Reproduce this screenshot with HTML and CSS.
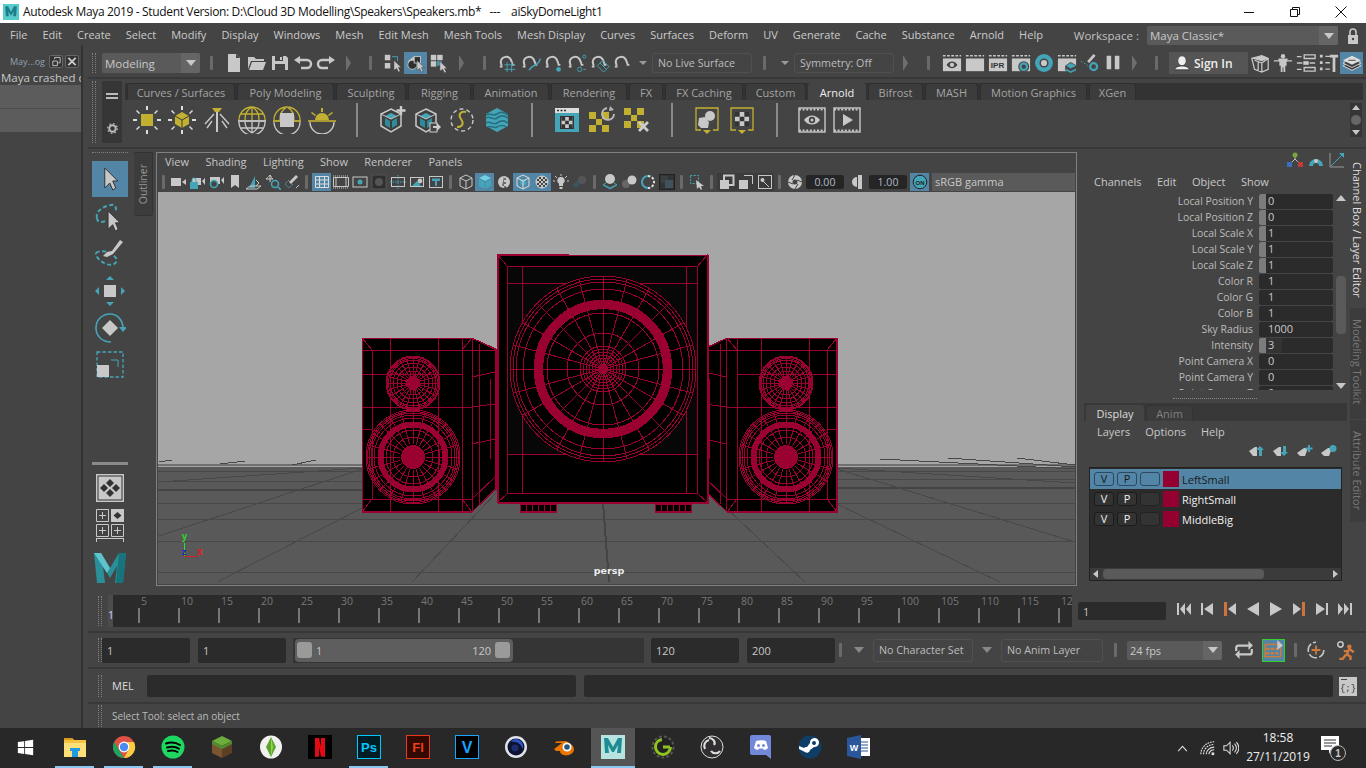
FILE: index.html
```html
<!DOCTYPE html>
<html lang="en">
<head>
<meta charset="utf-8">
<title>Autodesk Maya 2019</title>
<link rel="stylesheet" href="styles.css">
</head>
<body>
<svg class="defs" aria-hidden="true">
<defs>
<!-- status line -->
<symbol id="newf" viewBox="0 0 20 20"><path fill="#c8c8c8" d="M4 1h8l4 4v14H4z"/><path fill="#444" d="M12 1v4h4z"/></symbol>
<symbol id="open" viewBox="0 0 20 20"><path fill="#c8c8c8" d="M1 4h6l2 2h8v2H4L1 16zM5 9h14l-3 8H2z"/></symbol>
<symbol id="save" viewBox="0 0 20 20"><path fill="#c8c8c8" d="M2 3h14l2 2v12H2z"/><rect x="5" y="3" width="8" height="5" fill="#444"/><rect x="10" y="4" width="2" height="3" fill="#c8c8c8"/><rect x="5" y="11" width="10" height="6" fill="#444"/></symbol>
<symbol id="undo" viewBox="0 0 20 20"><path fill="none" stroke="#c8c8c8" stroke-width="2.4" d="M5 7h9a4 4 0 0 1 0 8H8"/><path fill="#c8c8c8" d="M7 3L1 7l6 4z"/></symbol>
<symbol id="redo" viewBox="0 0 20 20"><path fill="none" stroke="#c8c8c8" stroke-width="2.4" d="M15 7H6a4 4 0 0 0 0 8h6"/><path fill="#c8c8c8" d="M13 3l6 4-6 4z"/></symbol>
<symbol id="sel1" viewBox="0 0 22 22"><rect x="2" y="2" width="6" height="6" fill="#c8c8c8"/><rect x="2" y="11" width="6" height="6" fill="#c8c8c8"/><path fill="none" stroke="#45a5b8" d="M10 4h6v5"/><path fill="#c8c8c8" stroke="#333" stroke-width=".5" d="M12 8l8 8h-3l2 4-2 1-2-4-3 2z"/></symbol>
<symbol id="sel2" viewBox="0 0 22 22"><path fill="#c8c8c8" d="M2 9l6-5 4 1v5H2z"/><circle cx="7" cy="13" r="5" fill="#2f2f2f" stroke="#c8c8c8"/><rect x="9" y="4" width="7" height="7" fill="#2f2f2f" stroke="#c8c8c8"/><path fill="#c8c8c8" stroke="#333" stroke-width=".5" d="M12 8l8 8h-3l2 4-2 1-2-4-3 2z"/></symbol>
<symbol id="sel3" viewBox="0 0 22 22"><rect x="2" y="2" width="6" height="6" fill="#c8c8c8"/><rect x="9" y="2" width="6" height="6" fill="#c8c8c8"/><rect x="2" y="9" width="6" height="6" fill="#c8c8c8"/><rect x="9" y="9" width="5" height="5" fill="#45a5b8"/><path fill="#c8c8c8" stroke="#333" stroke-width=".5" d="M12 9l8 8h-3l2 4-2 1-2-4-3 2z"/></symbol>
<symbol id="mag" viewBox="0 0 22 22"><path fill="none" stroke="#c8c8c8" stroke-width="2.2" d="M4 14L3 10a6 6 0 0 1 11-3l2 5"/><rect x="2" y="14" width="3" height="2" fill="#c8c8c8"/><rect x="15" y="12" width="3" height="2" fill="#c8c8c8"/></symbol>
<symbol id="snap1" viewBox="0 0 22 22"><use href="#mag"/><path fill="none" stroke="#45a5b8" d="M10 10v11M15 10v11M7 13h12M7 18h12"/></symbol>
<symbol id="snap2" viewBox="0 0 22 22"><use href="#mag"/><path fill="none" stroke="#45a5b8" stroke-width="1.6" d="M21 6c0 8-9 6-12 13"/></symbol>
<symbol id="snap3" viewBox="0 0 22 22"><use href="#mag"/><circle cx="16" cy="18" r="2.6" fill="#45a5b8"/></symbol>
<symbol id="snap4" viewBox="0 0 22 22"><use href="#mag"/><circle cx="14" cy="18" r="2.4" fill="none" stroke="#45a5b8"/><circle cx="19" cy="4" r="1.7" fill="none" stroke="#45a5b8"/><path stroke="#45a5b8" d="M18 18h3"/></symbol>
<symbol id="snap5" viewBox="0 0 22 22"><use href="#mag"/><path fill="none" stroke="#45a5b8" d="M8 14l6-6 7 7-6 6z"/><path fill="none" stroke="#45a5b8" d="M11 11l7 7"/></symbol>
<symbol id="rnd" viewBox="0 0 22 22"><path stroke="#c8c8c8" stroke-width="1.6" stroke-dasharray="3 1.6" d="M1 3h20"/><rect x="1" y="6" width="20" height="14" fill="#c8c8c8"/></symbol>
<symbol id="rnd1" viewBox="0 0 22 22"><use href="#rnd"/><path fill="#444" d="M5 13c3-5 9-5 12 0-3 5-9 5-12 0z"/><circle cx="11" cy="13" r="2.4" fill="#c8c8c8"/></symbol>
<symbol id="rnd3" viewBox="0 0 22 22"><use href="#rnd"/><circle cx="14" cy="15" r="6" fill="#444"/><circle cx="14" cy="15" r="3.6" fill="none" stroke="#45a5b8" stroke-width="2.4"/></symbol>
<symbol id="rnd4" viewBox="0 0 22 22"><circle cx="11" cy="11" r="9.8" fill="#45a5b8"/><circle cx="11" cy="11" r="5" fill="#444"/><circle cx="11" cy="11" r="3.4" fill="#c8c8c8"/></symbol>
<symbol id="rnd5" viewBox="0 0 22 22"><use href="#rnd"/><path fill="#444" d="M9 14l6-4 7 4v6l-7 2-6-3z"/><path fill="#45a5b8" d="M10 14l5-3 6 3-6 3zM10 17l5 3 6-3v2l-6 3-5-3z"/></symbol>
<symbol id="rnd6" viewBox="0 0 22 22"><path stroke="#c8c8c8" stroke-width="3" d="M9 10l7-8"/><path stroke="#45a5b8" stroke-dasharray="2 2" d="M1 9l8 5"/><circle cx="15" cy="15" r="3.8" fill="none" stroke="#45a5b8" stroke-width="2.4"/></symbol>
<symbol id="pause" viewBox="0 0 22 22"><path fill="#c8c8c8" d="M4 3h5v15H4zM13 3h5v15h-5z"/></symbol>
<symbol id="user" viewBox="0 0 24 20"><ellipse cx="12" cy="7" rx="5" ry="6" fill="#eee"/><path fill="#eee" stroke="#111" stroke-width=".8" d="M2 19c1-4 6-5 10-5s9 1 10 5z"/></symbol>
<symbol id="mod" viewBox="0 0 22 22"><path fill="none" stroke="#c8c8c8" stroke-width="1.4" d="M2 6l11-3 7 3v12l-7 3-8-3zM5 8l8 3 7-5M13 11v10M9 10v10"/><path fill="#c8c8c8" d="M2 6l11-3 7 3-7 3z"/></symbol>
<symbol id="hik" viewBox="0 0 22 22"><circle cx="11" cy="3.6" r="2.4" fill="#c8c8c8"/><path fill="#c8c8c8" d="M1 8h5v-2h10v2h5v1.4h-6V14h-1.5v7h-2v-5h-1v5h-2v-7H7V9.4H1z"/></symbol>
<symbol id="tool" viewBox="0 0 22 22"><path fill="none" stroke="#c8c8c8" stroke-width="1.5" d="M9 2h12v4H9zM1 4h5M9 16h12v4H9zM1 18h5M1 11h6M15 11h6"/><rect x="8" y="9" width="6" height="4" fill="#c8c8c8"/></symbol>
<symbol id="attr" viewBox="0 0 22 22"><path fill="#c8c8c8" d="M1 2h3v3H1zM1 9h3v3H1zM1 16h3v3H1zM7 3h5v1.5H7zM7 10h5v1.5H7zM7 17h5v1.5H7zM12 2h9v3h-3v16h-3V5h-3z"/></symbol>
<symbol id="lay" viewBox="0 0 22 22"><path fill="#3d3d3d" stroke="#ddd" d="M1 14l10-5 10 5-10 5z"/><path fill="#3d3d3d" stroke="#ddd" d="M1 11l10-5 10 5-10 5z"/><path fill="#ddd" d="M1 8l10-5 10 5-10 5z"/><path stroke="#3d3d3d" d="M7 8h8"/></symbol>
<!-- shelf -->
<symbol id="dots" viewBox="0 0 28 28"><path fill="#ddd" d="M13 0h2v4h-2zM13 24h2v4h-2zM0 13h4v2H0zM24 13h4v2h-4zM4 4l3 3-1 1-3-3zM24 4l-3 3 1 1 3-3zM4 24l3-3-1-1-3 3zM24 24l-3-3 1-1 3 3z"/></symbol>
<symbol id="sh1" viewBox="0 0 28 28"><use href="#dots"/><rect x="8" y="8" width="12" height="12" fill="#c2b032"/></symbol>
<symbol id="sh2" viewBox="0 0 28 28"><use href="#dots"/><path fill="#c2b032" d="M14 6l7 4v8l-7 4-7-4v-8z"/><path fill="none" stroke="#3c3c3c" d="M7 10l7 4 7-4M14 14v8"/></symbol>
<symbol id="sh3" viewBox="0 0 28 28"><path fill="#c2b032" d="M9 2h10l-3 4h-4z"/><path stroke="#c8c8c8" stroke-width="2" d="M14 6v20"/><path fill="none" stroke="#c8c8c8" stroke-width="1.4" d="M11 8L2 18M17 8l9 10M9 15l-5 7M19 15l5 7"/></symbol>
<symbol id="sky1" viewBox="0 0 28 28"><path fill="none" stroke="#c2b032" stroke-width="1.3" d="M1 14a13 13 0 0 1 26 0M14 1c-7 4-7 9-7 13M14 1c7 4 7 9 7 13M14 1v13M3 8h22"/><path stroke="#ddd" stroke-width="1.6" d="M0 15h28"/><path fill="none" stroke="#c8c8c8" stroke-width="1.3" d="M1 16a13 13 0 0 0 26 0M14 27c-7-4-7-9-7-11M14 27c7-4 7-9 7-11M14 16v11M3 22h22"/></symbol>
<symbol id="sky2" viewBox="0 0 28 28"><path fill="none" stroke="#c2b032" stroke-width="1.3" d="M1 14a13 13 0 0 1 26 0M14 1c-7 4-7 9-7 13M14 1c7 4 7 9 7 13"/><path stroke="#c2b032" stroke-width="1.8" d="M0 15h28"/><path fill="none" stroke="#c8c8c8" stroke-width="1.3" d="M1 16a13 13 0 0 0 26 0"/><rect x="7" y="7" width="14" height="14" fill="#c8c8c8"/></symbol>
<symbol id="sky3" viewBox="0 0 28 28"><path fill="#c2b032" d="M7 14a7 7 0 0 1 14 0zM13 2h2v4h-2zM4 6l4 3-1 1-4-3zM24 6l-4 3 1 1 4-3z"/><path stroke="#c2b032" stroke-width="1.6" d="M0 15h28"/><path fill="none" stroke="#c8c8c8" stroke-width="1.4" d="M2 16a12 12 0 0 0 24 0"/></symbol>
<symbol id="cube" viewBox="0 0 28 28"><path fill="#3e3e3e" stroke="#c8c8c8" stroke-width="1.5" d="M13 3l10 5v12l-10 6-10-6V8z"/><path fill="#45a5b8" d="M7 10l6-3 6 3-6 3z"/><path fill="#2f8a9a" d="M7 12l5 3v7l-5-3zM19 12l-5 3v7l5-3z"/><path fill="none" stroke="#c8c8c8" d="M3 8l10 5 10-5"/></symbol>
<symbol id="sh7" viewBox="0 0 28 28"><use href="#cube"/><path stroke="#ccc" stroke-width="2.4" d="M23 0v9M18.500 4.500h9"/></symbol>
<symbol id="sh8" viewBox="0 0 28 28"><use href="#cube"/><rect x="17" y="17" width="7" height="9" fill="#444" stroke="#ccc"/><path fill="#ccc" d="M20 20h4v-3l4 4-4 4v-3h-4z"/></symbol>
<symbol id="sh9" viewBox="0 0 28 28"><circle cx="14" cy="14" r="11" fill="none" stroke="#c8c8c8" stroke-width="1.4" stroke-dasharray="4 3"/><path fill="none" stroke="#c2b032" stroke-width="2" d="M18 6c-6-1-8 3-5 7 3 4 2 8-4 8"/></symbol>
<symbol id="sh10" viewBox="0 0 28 28"><path fill="#45a5b8" d="M14 2l11 6v12l-11 6-11-6V8z"/><path fill="none" stroke="#27707e" stroke-width="1.6" d="M3 12c4-3 7 3 11 0s7-3 11 0M3 17c4-3 7 3 11 0s7-3 11 0M3 9c4-3 7 2 11-1s7-2 11 1M5 21c4-2 6 2 9 0s7-2 9 0"/></symbol>
<symbol id="chk" viewBox="0 0 12 12"><rect width="12" height="12" fill="#c8c8c8"/><path fill="#333" d="M0 0h4v4H0zM8 0h4v4H8zM4 4h4v4H4zM0 8h4v4H0zM8 8h4v4H8z"/></symbol>
<symbol id="sh11" viewBox="0 0 28 28"><rect x="2" y="2" width="24" height="24" fill="#45a5b8"/><rect x="2" y="2" width="24" height="5" fill="#ddd"/><path stroke="#333" stroke-dasharray="2 1.500" stroke-width="1.600" d="M4 4.500h9"/><rect x="7" y="10" width="14" height="13" fill="#333"/><use href="#chk" x="8" y="11" width="12" height="11"/></symbol>
<symbol id="ychk" viewBox="0 0 20 20"><path fill="#c2b032" d="M0 0h7v7H0zM13 0h7v7h-7zM7 7h6v6H7zM0 13h7v7H0zM13 13h7v7h-7z"/></symbol>
<symbol id="sh12" viewBox="0 0 28 28"><use href="#ychk" x="1" y="6" width="20" height="20"/><path fill="none" stroke="#bbb" stroke-width="1.8" d="M19 2a6 6 0 1 0 7 6"/><path fill="#bbb" d="M22 0l4 4-5 1z"/></symbol>
<symbol id="sh13" viewBox="0 0 28 28"><use href="#ychk" x="1" y="2" width="20" height="20"/><path stroke="#ccc" stroke-width="2.8" d="M16 16l9 9M25 16l-9 9"/></symbol>
<symbol id="sh14" viewBox="0 0 28 28"><path fill="none" stroke="#c2b032" stroke-width="1.300" d="M8 24H3V2h22v22h-5"/><path fill="#c2b032" d="M10 24h8l-4 4z"/><circle cx="17" cy="10" r="5" fill="#c8c8c8"/><path fill="#c8c8c8" d="M6 12l6-1 4 5-1 6H8l-3-3z"/></symbol>
<symbol id="sh15" viewBox="0 0 28 28"><path fill="none" stroke="#c2b032" stroke-width="1.300" d="M8 24H3V2h22v22h-5"/><path fill="#c2b032" d="M10 24h8l-4 4z"/><use href="#chk" x="7" y="6" width="14" height="14"/></symbol>
<symbol id="film" viewBox="0 0 28 26"><rect x="1" y="1" width="26" height="24" fill="none" stroke="#c8c8c8" stroke-width="1.400"/><path stroke="#c8c8c8" stroke-width="2" stroke-dasharray="2 1.600" d="M1 2.500h26M1 23.500h26"/></symbol>
<symbol id="sh16" viewBox="0 0 28 26"><use href="#film"/><path fill="#c8c8c8" d="M6 13c4-6 12-6 16 0-4 6-12 6-16 0z"/><circle cx="14" cy="13" r="3.200" fill="#444"/><circle cx="14" cy="13" r="1.500" fill="#c8c8c8"/></symbol>
<symbol id="sh17" viewBox="0 0 28 26"><use href="#film"/><path fill="#c8c8c8" d="M10 7l10 6-10 6z"/></symbol>
<symbol id="gear" viewBox="0 0 16 16"><circle cx="8" cy="8" r="4" fill="none" stroke="#bbb" stroke-width="2.400"/><circle cx="8" cy="8" r="6" fill="none" stroke="#bbb" stroke-width="1.400" stroke-dasharray="2 2.700"/></symbol>
<!-- toolbox -->
<symbol id="ptr" viewBox="0 0 16 24"><path fill="#c8c8c8" stroke="#333" d="M1 1l13 13H9l3 7-3 2-3-7-5 5z"/></symbol>
<symbol id="t1" viewBox="0 0 36 36"><use href="#ptr" x="11" y="4" width="18" height="28"/></symbol>
<symbol id="t2" viewBox="0 0 32 32"><path fill="none" stroke="#45a5b8" stroke-width="2" stroke-dasharray="4 2.500" d="M3 17C1 11 9 5 17 4c5-1 6 4 4 7M3 17c0 5 6 5 10 2"/><use href="#ptr" x="13" y="9" width="15" height="22"/></symbol>
<symbol id="t3" viewBox="0 0 32 32"><path fill="none" stroke="#45a5b8" stroke-width="2" stroke-dasharray="4 2.500" d="M2 15c3-3 14-3 20 5 3 6-6 9-12 5-5-3-8-6-8-10"/><path fill="#c8c8c8" d="M26 2l3 2-10 12-6 3-4-1 4-4 5-1z"/></symbol>
<symbol id="t4" viewBox="0 0 32 32"><rect x="10" y="10" width="12" height="12" fill="#c8c8c8"/><path fill="#45a5b8" d="M16 1l4 4h-8zM16 31l-4-4h8zM1 16l4-4v8zM31 16l-4 4v-8z"/></symbol>
<symbol id="t5" viewBox="0 0 32 32"><path fill="none" stroke="#45a5b8" stroke-width="1.600" d="M17 30C8 30 2 24 2 16S8 2 16 2c8 0 13 7 13 14"/><path fill="#45a5b8" d="M25 15h8l-4 5z"/><path fill="#c8c8c8" d="M16 8l8 8-8 8-8-8z"/></symbol>
<symbol id="t6" viewBox="0 0 32 32"><rect x="3" y="3" width="26" height="25" fill="none" stroke="#45a5b8" stroke-width="1.300" stroke-dasharray="3.500 2"/><path fill="none" stroke="#45a5b8" d="M17 11h7v7"/><rect x="3" y="16" width="12" height="12" fill="#c8c8c8"/></symbol>
<symbol id="pane" viewBox="0 0 28 28"><rect x="0" y="0" width="28" height="28" fill="#c8c8c8"/><rect x="2" y="2" width="24" height="24" fill="#c8c8c8" stroke="#333"/><path fill="#333" d="M14 5l4 4-4 4-4-4zM14 15l4 4-4 4-4-4zM8 10l4 4-4 4-4-4zM20 10l4 4-4 4-4-4z"/></symbol>
<symbol id="panes" viewBox="0 0 28 28"><path fill="none" stroke="#c8c8c8" d="M.5.5h12v12H.5zM.5 15.500h12v12H.5zM15.500 15.500h12v12h-12z"/><rect x="15" y="0" width="13" height="13" fill="#c8c8c8"/><path fill="#333" d="M21.500 3l4 3.500-4 3.500-4-3.500z"/><path stroke="#c8c8c8" d="M3 6.500h7M6.500 3v7M3 21.500h7M6.500 18v7M18 21.500h7M21.500 18v7"/></symbol>
<symbol id="mlogo" viewBox="0 0 32 30"><path fill="#2a8f98" d="M0 0h7l9 15 9-15h7l-3 30h-8l2-17-7 12-7-12 2 17H3z"/><path fill="#5fc3cb" d="M0 0h7l9 15-3 5z"/><path fill="#17737c" d="M32 0l-3 30h-7l3-30z"/></symbol>
<!-- panel icons -->
<symbol id="v1" viewBox="0 0 16 16"><rect x="1" y="4" width="10" height="8" fill="#c8c8c8"/><path fill="#c8c8c8" d="M12 8l4-3v6z"/></symbol>
<symbol id="v2" viewBox="0 0 16 16"><path fill="#c8c8c8" d="M3 4h9v7H3zM13 7l3-3v7z"/><rect x="1" y="8" width="8" height="7" fill="#45a5b8"/><path fill="none" stroke="#45a5b8" d="M3 8V6a2 2 0 0 1 4 0v2"/></symbol>
<symbol id="v3" viewBox="0 0 16 16"><path fill="#c8c8c8" d="M2 3h10v7H2zM13 6l3-3v7z"/><circle cx="6" cy="10" r="3.500" fill="#444" stroke="#45a5b8" stroke-width="1.600"/></symbol>
<symbol id="v4" viewBox="0 0 16 16"><path fill="#c8c8c8" d="M4 1h8v13l-4-3-4 3z"/></symbol>
<symbol id="v5" viewBox="0 0 16 16"><path fill="#45a5b8" d="M3 14l6-12v12z"/><path fill="none" stroke="#c8c8c8" d="M0 15l4-3h11l-4 3zM10 6l3 3-3 3"/></symbol>
<symbol id="v6" viewBox="0 0 16 16"><path fill="none" stroke="#c8c8c8" d="M5 1v7M1 5h7M5 1L3.500 3M5 1l1.500 2M1 5l2-1.500M8 5L6 3.500"/><circle cx="10" cy="10" r="3.500" fill="none" stroke="#45a5b8" stroke-width="1.600"/><path stroke="#45a5b8" stroke-width="1.600" d="M13 13l3 3"/></symbol>
<symbol id="v7" viewBox="0 0 16 16"><path fill="#c8c8c8" d="M12 1l2 2-7 7-2-2z"/><path fill="none" stroke="#45a5b8" stroke-dasharray="2 1" d="M5 6L1 10l4 4 4-4"/><path stroke="#c8c8c8" d="M12 14l3-3"/></symbol>
<symbol id="v8" viewBox="0 0 16 16"><path fill="none" stroke="#ddd" d="M1.500 2.500h13v11h-13zM1.500 6h13M1.500 10h13M5.500 2.500v11M10.500 2.500v11"/></symbol>
<symbol id="v9" viewBox="0 0 16 16"><path fill="none" stroke="#c8c8c8" d="M.5 3.500h15v9H.5zM3 3.500v9M13 3.500v9"/><path stroke="#c8c8c8" stroke-dasharray="1 1" d="M0 2h16M0 14h16"/></symbol>
<symbol id="v10" viewBox="0 0 16 16"><rect x="1" y="3" width="14" height="10" fill="none" stroke="#c8c8c8"/><circle cx="8" cy="8" r="2.500" fill="#45a5b8"/></symbol>
<symbol id="v11" viewBox="0 0 16 16"><rect x="1" y="1" width="14" height="14" fill="#2f2f2f" stroke="#555"/><circle cx="8" cy="8" r="4" fill="#555"/></symbol>
<symbol id="v12" viewBox="0 0 16 16"><rect x="1.500" y="3.500" width="13" height="9" fill="none" stroke="#c8c8c8"/><path stroke="#45a5b8" stroke-dasharray="1.500 1" d="M0 8h16M8 1v14"/></symbol>
<symbol id="v13" viewBox="0 0 16 16"><rect x="1.500" y="3.500" width="13" height="9" fill="none" stroke="#c8c8c8"/><path fill="#45a5b8" d="M3 12l5-5 4 5z"/><circle cx="11" cy="7" r="2.400" fill="#c8c8c8"/></symbol>
<symbol id="v14" viewBox="0 0 16 16"><rect x="1.500" y="2.500" width="13" height="11" fill="none" stroke="#c8c8c8"/><path fill="#45a5b8" d="M4 4.500h8v2.500h-3v5H7V7H4z"/></symbol>
<symbol id="v15" viewBox="0 0 16 16"><path fill="none" stroke="#c8c8c8" d="M8 1l6 3v8l-6 3-6-3V4zM2 4l6 3 6-3M8 7v8"/></symbol>
<symbol id="v16" viewBox="0 0 16 16"><path fill="#6fd0e0" d="M8 1l6 3-6 3-6-3z"/><path fill="#45a5b8" d="M2 5l5.500 3v7L2 12zM14 5L8.500 8v7l5.500-3z"/></symbol>
<symbol id="v17" viewBox="0 0 16 16"><circle cx="8" cy="8" r="6" fill="#c8c8c8"/><path fill="#444" d="M8 2v2h2v2H8v2h2v2H8v2h2v2H8v-2l-2 0z" opacity=".7"/></symbol>
<symbol id="v18" viewBox="0 0 16 16"><path fill="none" stroke="#ddd" d="M8 1l6 3v8l-6 3-6-3V4z"/><path fill="#45a5b8" d="M5 6l3-1.500L11 6v4l-3 2-3-2z"/><path fill="none" stroke="#ddd" d="M2 4l6 3 6-3M8 7v8"/></symbol>
<symbol id="v19" viewBox="0 0 16 16"><circle cx="8" cy="8" r="6.500" fill="#c8c8c8"/><path fill="#444" d="M3 5h2v2H3zM7 5h2v2H7zM11 5h2v2h-2zM5 7h2v2H5zM9 7h2v2H9zM3 9h2v2H3zM7 9h2v2H7zM11 9h2v2h-2zM5 11h2v2H5zM9 11h2v2H9zM5 3h2v2H5zM9 3h2v2H9z"/></symbol>
<symbol id="v20" viewBox="0 0 16 16"><path fill="#c8c8c8" d="M8 3a3.500 3.500 0 0 1 2 6.500V12H6V9.500A3.500 3.500 0 0 1 8 3zM6.500 13h3v2h-3z"/><path stroke="#c8c8c8" d="M0 7h2M14 7h2M2 2l2 2M14 2l-2 2M8 0v2"/></symbol>
<symbol id="v21" viewBox="0 0 16 16"><path fill="#3a5560" d="M1 11l6-6 3 3-6 6z"/><circle cx="10" cy="6" r="4" fill="#555"/></symbol>
<symbol id="v22" viewBox="0 0 16 16"><circle cx="8" cy="5" r="5" fill="#c8c8c8"/><path fill="none" stroke="#45a5b8" d="M2 11l6 3 6-3M4 9l-3 2 7 4 7-4-3-2"/></symbol>
<symbol id="v23" viewBox="0 0 16 16"><circle cx="5" cy="10" r="4" fill="#666"/><circle cx="11" cy="6" r="4.500" fill="#c8c8c8"/></symbol>
<symbol id="v24" viewBox="0 0 16 16"><path fill="none" stroke="#45a5b8" stroke-width="2" d="M8 2a6 6 0 0 0 0 12"/><path fill="none" stroke="#ddd" stroke-width="2" stroke-dasharray="2.500 1.500" d="M8 2a6 6 0 0 1 0 12"/></symbol>
<symbol id="v25" viewBox="0 0 16 16"><rect x=".500" y=".500" width="15" height="15" fill="#333" stroke="#222"/><rect x="2" y="2" width="7" height="7" fill="#3a3f42"/><rect x="6" y="6" width="8" height="8" fill="#40525c"/></symbol>
<symbol id="v26" viewBox="0 0 16 16"><path fill="none" stroke="#45a5b8" stroke-dasharray="2 1.300" d="M1.500 1.500h8v8h-8z"/><path fill="#c8c8c8" d="M7 6l8 6h-3l1 3-1 1-2-3-2 2z"/></symbol>
<symbol id="v27" viewBox="0 0 16 16"><rect x="5" y="1.500" width="9.500" height="9.500" fill="none" stroke="#c8c8c8" stroke-width="2"/><rect x="1" y="6" width="9" height="9" fill="#c8c8c8"/></symbol>
<symbol id="v28" viewBox="0 0 16 16"><path fill="none" stroke="#c8c8c8" d="M6 1.500h8.500V10"/><rect x="1" y="6" width="9" height="9" fill="#c8c8c8"/></symbol>
<symbol id="v29" viewBox="0 0 16 16"><rect x="1.500" y="1.500" width="13" height="13" fill="none" stroke="#c8c8c8"/><path stroke="#c8c8c8" d="M6 7l6 6"/><circle cx="5.500" cy="6" r="2" fill="#c8c8c8"/></symbol>
<symbol id="v30" viewBox="0 0 16 16"><circle cx="8" cy="8" r="7" fill="#c8c8c8"/><circle cx="8" cy="8" r="2.500" fill="#444"/><path stroke="#444" d="M8 1L5 6M15 8L10 6M8 15l3-5M1 8l5 2"/></symbol>
<symbol id="v31" viewBox="0 0 16 16"><path fill="#c8c8c8" d="M9 1h4v14H9z"/><path fill="#c8c8c8" d="M8 3a5 5 0 0 0 0 10z"/></symbol>
<symbol id="on" viewBox="0 0 16 16"><circle cx="8" cy="8" r="6.800" fill="#45a5b8" stroke="#222"/><text x="8" y="10.500" class="ontx">ON</text></symbol>
<symbol id="ch1" viewBox="0 0 16 16"><path stroke="#bbb" d="M8 7L3 12M8 7l5 5M8 7V4"/><circle cx="8" cy="3" r="2.500" fill="#7ba63a"/><rect x="0" y="10" width="5" height="5" fill="#3d6fc0"/><rect x="11" y="10" width="5" height="5" fill="#c23a3a"/></symbol>
<symbol id="ch2" viewBox="0 0 16 16"><path fill="#45a5b8" d="M1 14a7 7 0 1 1 14 0h-4a3 3 0 1 0-6 0z"/><circle cx="8" cy="9" r="2" fill="#c8c8c8"/></symbol>
<symbol id="ch3" viewBox="0 0 16 16"><path fill="none" stroke="#45a5b8" d="M15 1L2 14"/><path fill="none" stroke="#999" d="M1 1v14h14"/><path fill="#45a5b8" d="M15 1v5l-5-5z"/></symbol>
<symbol id="ly1" viewBox="0 0 16 12"><path fill="#c8c8c8" d="M0 6l6-4h2v9H4z"/><path fill="#45a5b8" d="M11 1l4 4h-2v6h-3V5H7z"/></symbol>
<symbol id="ly2" viewBox="0 0 16 12"><path fill="#c8c8c8" d="M0 6l6-4h2v9H4z"/><path fill="#45a5b8" d="M11 11l4-4h-2V1h-3v6H7z"/></symbol>
<symbol id="ly3" viewBox="0 0 16 12"><path fill="#c8c8c8" d="M0 8l7-5h4l-3 8H3z"/><path stroke="#45a5b8" stroke-width="2" d="M12 0v7M8.500 3.500h7"/></symbol>
<symbol id="ly4" viewBox="0 0 16 12"><path fill="#c8c8c8" d="M0 8l7-5h4l-3 8H3z"/><circle cx="12" cy="3.500" r="3.500" fill="#45a5b8"/></symbol>
<!-- playback -->
<symbol id="p1" viewBox="0 0 16 16"><path fill="#c8c8c8" d="M1 2h2v12H1zM9 2v12L4 8zM15 2v12L10 8z"/></symbol>
<symbol id="p2" viewBox="0 0 16 16"><path fill="#c8c8c8" d="M2 2h2v12H2zM14 2v12L5 8z"/></symbol>
<symbol id="p3" viewBox="0 0 16 16"><path fill="#d0733a" d="M2 1h3v14H2z"/><path fill="#c8c8c8" d="M14 2v12L6 8z"/></symbol>
<symbol id="p4" viewBox="0 0 16 16"><path fill="#c8c8c8" d="M14 1v14L2 8z"/></symbol>
<symbol id="p5" viewBox="0 0 16 16"><path fill="#c8c8c8" d="M2 1v14l12-7z"/></symbol>
<symbol id="p6" viewBox="0 0 16 16"><path fill="#d0733a" d="M11 1h3v14h-3z"/><path fill="#c8c8c8" d="M2 2v12l8-6z"/></symbol>
<symbol id="p7" viewBox="0 0 16 16"><path fill="#c8c8c8" d="M2 2v12l9-6zM12 2h2v12h-2z"/></symbol>
<symbol id="p8" viewBox="0 0 16 16"><path fill="#c8c8c8" d="M1 2v12l5-6zM7 2v12l5-6zM13 2h2v12h-2z"/></symbol>
<symbol id="loop" viewBox="0 0 18 18"><path fill="none" stroke="#c8c8c8" stroke-width="2" d="M2 10V7a2 2 0 0 1 2-2h10M16 8v3a2 2 0 0 1-2 2H4"/><path fill="#c8c8c8" d="M13 1l4 4-4 4zM5 9l-4 4 4 4z"/></symbol>
<symbol id="cach" viewBox="0 0 18 18"><rect x="1" y="4" width="14" height="11" fill="none" stroke="#d07a3c" stroke-width="1.300"/><path stroke="#d07a3c" stroke-width="2" stroke-dasharray="3 1" d="M2 8h12M2 12h12"/><path fill="#c8c8c8" d="M12 0l5 5-5 4z"/></symbol>
<symbol id="tm" viewBox="0 0 18 18"><path fill="none" stroke="#c8c8c8" stroke-width="1.400" stroke-dasharray="8 2" d="M16 9A7 7 0 1 1 9 2"/><path stroke="#d07a3c" stroke-width="1.600" d="M9 5v8M5 9h8"/></symbol>
<symbol id="run" viewBox="0 0 18 18"><circle cx="4" cy="4" r="2.400" fill="none" stroke="#c8c8c8" stroke-width="1.400"/><circle cx="12" cy="6" r="2" fill="#d07a3c"/><path fill="none" stroke="#d07a3c" stroke-width="2.200" d="M7 10h4l1-2 4 3M11 10l-1 3 3 2v3M9 13l-3 4H3"/></symbol>
<symbol id="scr" viewBox="0 0 20 22"><rect x="1" y="2" width="18" height="19" fill="#c8c8c8"/><path stroke="#444" d="M3 4.500h6"/><text x="10" y="16" class="scrtx">{;}</text></symbol>
<!-- taskbar -->
<symbol id="win" viewBox="0 0 20 20"><path fill="#fff" d="M1 3.500l7.500-1v7H1zM9.500 2.300L19 1v8.500H9.500zM1 10.500h7.500v7L1 16.500zM9.500 10.500H19V19l-9.500-1.300z"/></symbol>
<symbol id="exp" viewBox="0 0 24 24"><path fill="#f5c242" d="M1 3h8l2 2h12v17H1z"/><path fill="#d89a1c" d="M1 3h8l2 2H1z"/><path fill="#fde07a" d="M1 8h22v14H1z"/><path fill="#1f9be3" d="M7 13h10v3H7zM9 16h6v6H9z"/></symbol>
<symbol id="chr" viewBox="0 0 24 24"><circle cx="12" cy="12" r="11" fill="#de5145"/><path fill="#1da45f" d="M2.500 6.500L7 15l5 8a11 11 0 0 1-9.500-16.500z"/><path fill="#fbcd3e" d="M12 7h10a11 11 0 0 1-10 16l5-9z"/><circle cx="12" cy="12" r="5.400" fill="#fff"/><circle cx="12" cy="12" r="4.200" fill="#4c8bf5"/></symbol>
<symbol id="spo" viewBox="0 0 24 24"><circle cx="12" cy="12" r="11.500" fill="#1ed760"/><path fill="none" stroke="#000" stroke-width="2" stroke-linecap="round" d="M5 8.500c5-1.500 10-1 14 1.500M6 12.500c4-1 9-.8 12 1.300M7 16c3-.8 7-.6 9.500 1"/></symbol>
<symbol id="mc" viewBox="0 0 24 24"><path fill="#6cae3c" d="M12 1l10 5-10 5L2 6z"/><path fill="#7b5431" d="M2 6l10 5v12L2 18z"/><path fill="#5d3f24" d="M22 6l-10 5v12l10-5z"/><path fill="#4f8e2e" d="M2 6l10 5v3L2 9zM22 6l-10 5v3l10-5z"/></symbol>
<symbol id="sim" viewBox="0 0 24 24"><ellipse cx="12" cy="12" rx="11" ry="11.500" fill="#f1f1ef"/><path fill="#5aa52e" d="M12 2l5 10-5 10-5-10z"/><path fill="#95d455" d="M12 2l2 10-2 10z"/></symbol>
<symbol id="nfx" viewBox="0 0 24 24"><rect width="24" height="24" fill="#000"/><path fill="#e50914" d="M7 3h4l2 9V3h4v19l-4-.4L11 12v9.500l-4 .5z"/></symbol>
<symbol id="ps" viewBox="0 0 24 24"><rect x=".5" y=".5" width="23" height="23" fill="#001d26" stroke="#00c8ff"/><text x="12" y="17" class="tbtx psc">Ps</text></symbol>
<symbol id="fl" viewBox="0 0 24 24"><rect x=".5" y=".5" width="23" height="23" fill="#330a00" stroke="#e8391a"/><text x="12" y="17" class="tbtx flc">Fl</text></symbol>
<symbol id="veg" viewBox="0 0 24 24"><rect x=".5" y=".5" width="23" height="23" fill="#000" stroke="#1aa3ff"/><text x="12" y="18" class="tbtx vc">V</text></symbol>
<symbol id="c4d" viewBox="0 0 24 24"><circle cx="12" cy="12" r="11" fill="#dfe3ea"/><circle cx="12" cy="12" r="8.500" fill="#0d1330"/><path fill="#2e55c8" d="M12 4c6 1 8 6 7 10-3-6-6-8-12-7 1-2 3-3 5-3z"/><circle cx="11" cy="13" r="3.500" fill="#1c2c70"/></symbol>
<symbol id="bld" viewBox="0 0 24 24"><path fill="#ea7600" d="M1 14l8-6-7 0 1-1.500 10-.5 6 4c3 3 3 8-3 10-5 1.500-9-1-9-4L3 16z"/><circle cx="14" cy="12" r="4.500" fill="#fff"/><circle cx="14" cy="12" r="2.800" fill="#265787"/></symbol>
<symbol id="may" viewBox="0 0 24 24"><rect width="24" height="24" fill="#b8e4e0"/><path fill="#1f8c95" d="M3 3h4l5 9 5-9h4l-1 15h-4l1-8-4 7h-2L7 10l1 8H4z"/></symbol>
<symbol id="gim" viewBox="0 0 24 24"><circle cx="12" cy="12" r="10.500" fill="#222" stroke="#555" stroke-width="2" stroke-dasharray="3 2"/><circle cx="12" cy="12" r="7.500" fill="none" stroke="#8fc31f" stroke-width="3" stroke-dasharray="34 13"/><path stroke="#8fc31f" stroke-width="3" d="M12 12h7"/></symbol>
<symbol id="obs" viewBox="0 0 24 24"><circle cx="12" cy="12" r="11" fill="#302e31" stroke="#ddd"/><path fill="none" stroke="#ddd" stroke-width="2.200" d="M9 3c4 0 7 4 5 7M20 16c-2 3-7 3-9 0M5 14c-2-4 0-8 4-9"/></symbol>
<symbol id="dis" viewBox="0 0 24 24"><path fill="#7289da" d="M3 0h17a2 2 0 0 1 2 2v22l-5-4H3a2 2 0 0 1-2-2V2a2 2 0 0 1 2-2z"/><path fill="#fff" d="M7 6c3-1 7-1 10 0l2 7c-1 1-3 2-4 2l-1-1.500h-4L9 15c-1 0-3-1-4-2z"/><circle cx="9.500" cy="10.500" r="1.500" fill="#7289da"/><circle cx="14.500" cy="10.500" r="1.500" fill="#7289da"/></symbol>
<symbol id="stm" viewBox="0 0 24 24"><circle cx="12" cy="12" r="11.500" fill="#103d66"/><path fill="#fff" d="M1 14l6 3a3 3 0 0 0 5-2l4-3a4.500 4.500 0 1 0-4-4l-3 4a3 3 0 0 0-3 1L1 11z"/><circle cx="16" cy="8" r="2" fill="#103d66"/></symbol>
<symbol id="wrd" viewBox="0 0 24 24"><path fill="#fff" d="M10 3h13v18H10z"/><path stroke="#2b579a" d="M13 7h8M13 10h8M13 13h8M13 16h8"/><path fill="#2b579a" d="M0 3l14-3v24L0 21z"/><text x="7" y="16" class="tbtx wc">W</text></symbol>
<symbol id="wifi" viewBox="0 0 18 18"><path fill="none" stroke="#ddd" stroke-width="1.300" stroke-dasharray="2 1" d="M1 16C1 8 8 2 16 2M4 16c0-6 5-11 12-11"/><path fill="none" stroke="#ddd" stroke-width="1.300" d="M7 16c0-4 4-8 9-8M10 16c0-3 3-5 6-5"/><path fill="#ddd" d="M13 14h3v3h-3z"/></symbol>
<symbol id="vol" viewBox="0 0 18 18"><path fill="none" stroke="#ddd" stroke-width="1.200" d="M1 6.500h3l4-4v13l-4-4H1zM10.500 6c1.500 2 1.500 4 0 6M13 4c2.500 3 2.500 7 0 10M15 2.500c3.500 4 3.500 9 0 13"/></symbol>
<symbol id="note" viewBox="0 0 28 28"><path fill="#fff" d="M3 2h18v14h-8l-2 4v-4H3z"/><path stroke="#333" d="M6 6h12M6 9h12M6 12h8"/><circle cx="20" cy="19" r="7.500" fill="#2a2a2a" stroke="#bbb"/><text x="20" y="23" class="tbtx ntc">1</text></symbol>
<symbol id="wsm" viewBox="0 0 22 22"><rect width="22" height="22" fill="#46c5c5" opacity=".9"/><path fill="#1f7d89" d="M3 3h4l4 8 4-8h4l-1 14h-4l.6-7L11 16 7.400 10l.6 7H4z"/></symbol>
<!-- wireframe -->
<path id="rays" vector-effect="non-scaling-stroke" d="M-100 0H100M-96.600-25.900L96.600 25.900M-86.600-50L86.600 50M-70.700-70.700L70.700 70.700M-50-86.600L50 86.600M-25.900-96.600L25.900 96.600M0-100V100M25.900-96.600L-25.900 96.600M50-86.600L-50 86.600M70.700-70.700L-70.700 70.700M86.600-50L-86.600 50M96.600-25.900L-96.600 25.900"/>
<g id="woof">
<use href="#rays" transform="scale(.46)"/>
<circle class="ln" r="47"/><circle class="ln" r="45.500"/><circle class="ln" r="44"/><circle class="ln" r="42"/><circle class="ln" r="39"/>
<circle class="ln thick6" r="32.500"/><circle class="ln" r="27"/><circle class="ln" r="20"/>
<circle class="blk" r="13"/><circle class="fillc" r="12"/>
</g>
<g id="twee">
<use href="#rays" transform="scale(.25)"/>
<circle class="ln" r="27"/><circle class="ln" r="26"/><circle class="ln" r="24.500"/><circle class="ln" r="23"/><circle class="ln" r="20"/><circle class="ln" r="16"/><circle class="ln" r="12"/>
<circle class="fillc" r="7"/>
</g>
<g id="sspk">
<path class="blkp" d="M362 339H472L496 350V490L472 513H362z"/>
<path d="M362.500 339.500H472.500L495.500 350.500V489.500L472.500 512.500H362.500z"/>
<path d="M472.500 339.500V512.500M372 351H462V500H372zM362 351H372M462 351H495M390 339V513M438 339V513M462 339V513M362 408H472L495 405M362 500H472L495 478M362 339L372 351M472 339L462 351M362 513L372 500M472 513L462 500M362 375H462M362 430H372M472 378L495 373M472 445L495 440M490 380V460M495 380V460M479 345V505"/>
<use href="#twee" transform="translate(413 384)"/>
<use href="#woof" transform="translate(413 458)"/>
</g>
</defs>
</svg>

<header class="title">
  <svg class="tlogo"><use href="#wsm"/></svg>
  <span class="ttext">Autodesk Maya 2019 - Student Version: D:\Cloud 3D Modelling\Speakers\Speakers.mb*&nbsp;&nbsp;&nbsp;---&nbsp;&nbsp;&nbsp;&nbsp;aiSkyDomeLight1</span>
  <div class="wctl">
    <svg class="wbtn" viewBox="0 0 12 12"><path stroke="#111" d="M1 6.500h10"/></svg>
    <svg class="wbtn" viewBox="0 0 12 12"><path fill="none" stroke="#111" d="M1.500 3.500h7v7h-7zM3.500 3.500v-2h7v7h-2"/></svg>
    <svg class="wbtn" viewBox="0 0 12 12"><path stroke="#111" d="M.5.500l11 11M11.500.500l-11 11"/></svg>
  </div>
</header>

<nav class="menubar">
  <span>File</span><span>Edit</span><span>Create</span><span>Select</span><span>Modify</span><span>Display</span><span>Windows</span><span>Mesh</span><span>Edit Mesh</span><span>Mesh Tools</span><span>Mesh Display</span><span>Curves</span><span>Surfaces</span><span>Deform</span><span>UV</span><span>Generate</span><span>Cache</span><span>Substance</span><span>Arnold</span><span>Help</span>
  <div class="wsp">
    <span class="wsplab">Workspace :</span>
    <div class="wspbox"><span>Maya Classic*</span><b class="dcell"><i class="tri"></i></b></div>
    <svg class="lock" viewBox="0 0 12 16"><path fill="none" stroke="#c8c8c8" stroke-width="1.600" d="M3 7V4a3 3 0 0 1 6 0v3"/><rect x="1" y="7" width="10" height="9" fill="#c8c8c8"/><circle cx="6" cy="11" r="1.200" fill="#444"/></svg>
  </div>
</nav>

<div class="main">
  <aside class="left">
    <div class="lhead">
      <span class="lname">May...og</span>
      <span class="lbtn"><svg viewBox="0 0 12 12"><path fill="none" stroke="#ccc" d="M2.500 5.500h5v5h-5zM4.500 3.500v-2h6v6h-2"/></svg></span>
      <span class="lbtn"><svg viewBox="0 0 12 12"><path stroke="#ccc" stroke-width="2" d="M2 2l8 8M10 2l-8 8"/></svg></span>
    </div>
    <div class="lcrash">Maya crashed d</div>
    <div class="lblock"></div>
  </aside>

  <div class="work">
    <section class="status">
      <i class="hd"></i>
      <div class="drop drop-mode"><span>Modeling</span><b class="dcell"><i class="tri"></i></b></div>
      <i class="sep w22"></i>
      <span class="c23"><svg class="ic"><use href="#newf"/></svg></span>
      <span class="c23"><svg class="ic"><use href="#open"/></svg></span>
      <span class="c23"><svg class="ic"><use href="#save"/></svg></span>
      <span class="c23"><svg class="ic"><use href="#undo"/></svg></span>
      <span class="c23"><svg class="ic"><use href="#redo"/></svg></span>
      <i class="arr w22"></i>
      <i class="sep w22"></i>
      <span class="c23"><svg class="ic"><use href="#sel1"/></svg></span>
      <span class="c23 on"><svg class="ic"><use href="#sel2"/></svg></span>
      <span class="c23"><svg class="ic"><use href="#sel3"/></svg></span>
      <i class="arr w22"></i>
      <i class="sep w24"></i>
      <span class="c23"><svg class="ic"><use href="#snap1"/></svg></span>
      <span class="c23"><svg class="ic"><use href="#snap2"/></svg></span>
      <span class="c23"><svg class="ic"><use href="#snap3"/></svg></span>
      <span class="c23"><svg class="ic"><use href="#snap4"/></svg></span>
      <span class="c23"><svg class="ic"><use href="#snap5"/></svg></span>
      <span class="c23"><svg class="ic"><use href="#mag"/></svg></span>
      <span class="darr w18"><i class="tri sm"></i></span>
      <div class="sbox">No Live Surface</div>
      <i class="sep w24"></i>
      <span class="darr w18"><i class="tri sm"></i></span>
      <div class="sbox">Symmetry: Off</div>
      <i class="arr w22"></i>
      <i class="sep w24"></i>
      <span class="c23"><svg class="ic"><use href="#rnd1"/></svg></span>
      <span class="c23"><svg class="ic"><use href="#rnd"/></svg></span>
      <span class="c23 ipr"><svg class="ic"><use href="#rnd"/></svg><em>IPR</em></span>
      <span class="c23"><svg class="ic"><use href="#rnd3"/></svg></span>
      <span class="c23"><svg class="ic"><use href="#rnd4"/></svg></span>
      <span class="c23"><svg class="ic"><use href="#rnd5"/></svg></span>
      <span class="c23"><svg class="ic"><use href="#rnd6"/></svg></span>
      <span class="c23"><svg class="ic"><use href="#pause"/></svg></span>
      <i class="arr w20"></i>
      <i class="sep w25"></i>
      <div class="sign"><svg class="usr"><use href="#user"/></svg><span>Sign In</span></div>
      <span class="c23"><svg class="ic"><use href="#mod"/></svg></span>
      <span class="c23"><svg class="ic"><use href="#hik"/></svg></span>
      <span class="c23"><svg class="ic"><use href="#tool"/></svg></span>
      <span class="c23"><svg class="ic"><use href="#attr"/></svg></span>
      <span class="c23 on"><svg class="ic"><use href="#lay"/></svg></span>
    </section>
    <div class="rule"></div>

    <section class="shelf">
      <i class="hd tall"></i>
      <div class="shelfl">
        <svg class="eq" viewBox="0 0 12 6"><path fill="#bbb" d="M0 0h12v2H0zM0 4h12v2H0z"/></svg>
        <svg class="gr"><use href="#gear"/></svg>
      </div>
      <div class="shelfm">
        <div class="tabs">
          <span>Curves / Surfaces</span><span>Poly Modeling</span><span>Sculpting</span><span>Rigging</span><span>Animation</span><span>Rendering</span><span>FX</span><span>FX Caching</span><span>Custom</span><span class="act">Arnold</span><span>Bifrost</span><span>MASH</span><span>Motion Graphics</span><span>XGen</span>
        </div>
        <div class="shbody">
          <span class="c35"><svg class="sh"><use href="#sh1"/></svg></span>
          <span class="c35"><svg class="sh"><use href="#sh2"/></svg></span>
          <span class="c35"><svg class="sh"><use href="#sh3"/></svg></span>
          <span class="c35"><svg class="sh"><use href="#sky1"/></svg></span>
          <span class="c35"><svg class="sh"><use href="#sky2"/></svg></span>
          <span class="c35"><svg class="sh"><use href="#sky3"/></svg></span>
          <span class="c35"><i class="shsep"></i></span>
          <span class="c35"><svg class="sh"><use href="#sh7"/></svg></span>
          <span class="c35"><svg class="sh"><use href="#sh8"/></svg></span>
          <span class="c35"><svg class="sh"><use href="#sh9"/></svg></span>
          <span class="c35"><svg class="sh"><use href="#sh10"/></svg></span>
          <span class="c35"><i class="shsep"></i></span>
          <span class="c35"><svg class="sh"><use href="#sh11"/></svg></span>
          <span class="c35"><svg class="sh"><use href="#sh12"/></svg></span>
          <span class="c35"><svg class="sh"><use href="#sh13"/></svg></span>
          <span class="c35"><i class="shsep"></i></span>
          <span class="c35"><svg class="sh"><use href="#sh14"/></svg></span>
          <span class="c35"><svg class="sh"><use href="#sh15"/></svg></span>
          <span class="c35"><i class="shsep"></i></span>
          <span class="c35"><svg class="sh"><use href="#sh16"/></svg></span>
          <span class="c35"><svg class="sh"><use href="#sh17"/></svg></span>
          <div class="shscroll">
            <i class="tri up"></i><i class="shdot"></i><i class="tri"></i>
          </div>
        </div>
      </div>
    </section>
    <div class="rule"></div>

    <section class="center">
      <div class="toolbox">
        <div class="tdots"></div>
        <span class="tool on"><svg class="ti"><use href="#t1"/></svg></span>
        <span class="tool"><svg class="ti"><use href="#t2"/></svg></span>
        <span class="tool"><svg class="ti"><use href="#t3"/></svg></span>
        <span class="tool"><svg class="ti"><use href="#t4"/></svg></span>
        <span class="tool"><svg class="ti"><use href="#t5"/></svg></span>
        <span class="tool"><svg class="ti"><use href="#t6"/></svg></span>
        <div class="tline"></div>
        <svg class="tpane"><use href="#pane"/></svg>
        <svg class="tpanes"><use href="#panes"/></svg>
        <div class="tcut"></div>
        <svg class="tlogo2"><use href="#mlogo"/></svg>
      </div>
      <div class="outl"><span>Outliner</span></div>

      <div class="frame">
        <div class="vmenu"><span>View</span><span>Shading</span><span>Lighting</span><span>Show</span><span>Renderer</span><span>Panels</span></div>
        <div class="vbar">
          <i class="sep w10"></i>
          <span class="c19"><svg class="vi"><use href="#v1"/></svg></span>
          <span class="c19"><svg class="vi"><use href="#v2"/></svg></span>
          <span class="c19"><svg class="vi"><use href="#v3"/></svg></span>
          <span class="c19"><svg class="vi"><use href="#v4"/></svg></span>
          <span class="c19"><svg class="vi"><use href="#v5"/></svg></span>
          <span class="c19"><svg class="vi"><use href="#v6"/></svg></span>
          <span class="c19"><svg class="vi"><use href="#v7"/></svg></span>
          <i class="sep w11"></i>
          <span class="c19 on"><svg class="vi"><use href="#v8"/></svg></span>
          <span class="c19"><svg class="vi"><use href="#v9"/></svg></span>
          <span class="c19"><svg class="vi"><use href="#v10"/></svg></span>
          <span class="c19"><svg class="vi"><use href="#v11"/></svg></span>
          <span class="c19"><svg class="vi"><use href="#v12"/></svg></span>
          <span class="c19"><svg class="vi"><use href="#v13"/></svg></span>
          <span class="c19"><svg class="vi"><use href="#v14"/></svg></span>
          <i class="sep w11"></i>
          <span class="c19"><svg class="vi"><use href="#v15"/></svg></span>
          <span class="c19 on"><svg class="vi"><use href="#v16"/></svg></span>
          <span class="c19"><svg class="vi"><use href="#v17"/></svg></span>
          <span class="c19 on"><svg class="vi"><use href="#v18"/></svg></span>
          <span class="c19 on"><svg class="vi"><use href="#v19"/></svg></span>
          <span class="c19"><svg class="vi"><use href="#v20"/></svg></span>
          <span class="c19"><svg class="vi"><use href="#v21"/></svg></span>
          <i class="sep w11"></i>
          <span class="c19"><svg class="vi"><use href="#v22"/></svg></span>
          <span class="c19"><svg class="vi"><use href="#v23"/></svg></span>
          <span class="c19"><svg class="vi"><use href="#v24"/></svg></span>
          <span class="c19"><svg class="vi"><use href="#v25"/></svg></span>
          <i class="sep w11"></i>
          <span class="c19"><svg class="vi"><use href="#v26"/></svg></span>
          <i class="sep w11"></i>
          <span class="c19 dk"><svg class="vi"><use href="#v27"/></svg></span>
          <span class="c19 dk"><svg class="vi"><use href="#v28"/></svg></span>
          <span class="c19 dk"><svg class="vi"><use href="#v29"/></svg></span>
          <i class="sep w11"></i>
          <span class="c19"><svg class="vi"><use href="#v30"/></svg></span>
          <span class="vnum">0.00</span>
          <span class="c19 n2"><svg class="vi"><use href="#v31"/></svg></span>
          <span class="vnum">1.00</span>
          <span class="c19 on onb"><svg class="vi"><use href="#on"/></svg></span>
          <div class="gamma">sRGB gamma</div>
        </div>
        <div class="canvas">
          <svg class="scene" viewBox="158 193 917 392">
            <rect x="158" y="193" width="917" height="392" fill="#a6a6a6"/>
            <rect x="158" y="468" width="917" height="117" fill="#595959"/>
            <g class="floor">
              <path class="lt" d="M158 466H1075"/>
              <path d="M158 472H362M836 472H1075M158 482H362M836 480H1075M158 504H362M836 504H1075M158 520H1075M158 542H1075M158 573H1075"/>
              <path class="hv" d="M158 491H362M836 489H1075"/>
              <path d="M159 537L362 470M217 583L370 505M412 583L497 493M708 492L805 583M837 505L1000 583M837 470L1075 543M837 469L1075 484M159 483L362 469M159 463L172 461M220 465L245 462M292 466L316 461M880 460L1075 470M948 459L1075 468M1017 459L1075 466"/>
              <path class="hv" d="M603 503L609 583M483 491H497M708 490H717"/>
            </g>
            <g class="wire">
              <use href="#sspk"/>
              <use href="#sspk" transform="translate(1199 0) scale(-1 1)"/>
              <path class="blkp" d="M520 505h36v8h-36zM655 505h36v8h-36z"/>
              <path d="M520 505v7h36v-7M526 505v7M532 505v7M538 505v7M544 505v7M550 505v7M655 505v7h36v-7M661 505v7M667 505v7M673 505v7M679 505v7M685 505v7"/>
              <rect class="blkp" x="498" y="256" width="210" height="248"/>
              <rect class="gls" x="507" y="267" width="191" height="188"/>
              <path d="M497.500 255.500H569M569 256.500H707.500V503.500H497.500V255.500M507.500 267.500H697.500V494.500H507.500ZM497.500 255.500L507.500 267.500M707.500 255.500L697.500 267.500M497.500 503.500L507.500 494.500M707.500 503.500L697.500 494.500M522.500 267.500V494.500M686.500 267.500V494.500M507.500 284.500H697.500M507.500 455.500H697.500"/>
              <g transform="translate(603 370)">
                <circle class="blk" r="93"/>
                <use href="#rays" transform="scale(.93)"/>
                <circle class="blk" r="60"/>
                <use href="#rays" transform="scale(.6)"/>
                <circle class="ln" r="93"/><circle class="ln" r="90"/><circle class="ln" r="87"/><circle class="ln" r="80"/>
                <circle class="ln thick9" r="64.500"/><circle class="ln" r="56"/><circle class="ln" r="36"/>
                <circle class="blk" r="23"/>
                <use href="#rays" transform="scale(.23)"/>
                <circle class="ln" r="23"/><circle class="ln" r="20"/><circle class="ln" r="17"/><circle class="ln" r="14"/><circle class="ln" r="11"/><circle class="ln" r="8"/><circle class="ln" r="5"/><circle class="fillc" r="2.500"/>
              </g>
            </g>
            <path class="ax gr1" d="M184.500 544V558"/>
            <path class="ax rd1" d="M184 557.500H198"/>
            <path class="ax bl1" d="M183 551H186"/>
            <text x="184.500" y="541" class="axt gt">y</text>
            <text x="200" y="556" class="axt rt">x</text>
            <text x="184" y="556" class="axt bt">z</text>
            <text x="609" y="575" class="persp">persp</text>
          </svg>
        </div>
      </div>

      <div class="right">
        <div class="rico">
          <svg class="vi"><use href="#ch1"/></svg>
          <svg class="vi"><use href="#ch2"/></svg>
          <svg class="vi"><use href="#ch3"/></svg>
        </div>
        <div class="rmenu"><span>Channels</span><span>Edit</span><span>Object</span><span>Show</span></div>
        <div class="chan">
          <div class="rows">
            <div class="row"><label>Local Position Y</label><div class="cell"><i class="gy"></i><span>0</span></div></div>
            <div class="row"><label>Local Position Z</label><div class="cell"><i class="gy"></i><span>0</span></div></div>
            <div class="row"><label>Local Scale X</label><div class="cell"><i class="gy"></i><span>1</span></div></div>
            <div class="row"><label>Local Scale Y</label><div class="cell"><i class="gy"></i><span>1</span></div></div>
            <div class="row"><label>Local Scale Z</label><div class="cell"><i class="gy"></i><span>1</span></div></div>
            <div class="row"><label>Color R</label><div class="cell"><i class="no"></i><span>1</span></div></div>
            <div class="row"><label>Color G</label><div class="cell"><i class="no"></i><span>1</span></div></div>
            <div class="row"><label>Color B</label><div class="cell"><i class="no"></i><span>1</span></div></div>
            <div class="row"><label>Sky Radius</label><div class="cell"><i class="no"></i><span>1000</span></div></div>
            <div class="row"><label>Intensity</label><div class="cell"><i class="gy"></i><span class="hl">3</span></div></div>
            <div class="row"><label>Point Camera X</label><div class="cell"><i class="no"></i><span>0</span></div></div>
            <div class="row"><label>Point Camera Y</label><div class="cell"><i class="no"></i><span>0</span></div></div>
            <div class="row"><label>Point Camera Z</label><div class="cell"><i class="no"></i><span>0</span></div></div>
          </div>
          <div class="vscroll"><i class="tri up"></i><i class="thumb"></i><i class="tri"></i></div>
        </div>
        <div class="dotline"></div>
        <div class="layer">
          <div class="ltabs"><span class="act">Display</span><span>Anim</span></div>
          <div class="lbody">
            <div class="lmenu"><span>Layers</span><span>Options</span><span>Help</span></div>
            <div class="lico">
              <svg class="li"><use href="#ly1"/></svg>
              <svg class="li"><use href="#ly2"/></svg>
              <svg class="li"><use href="#ly3"/></svg>
              <svg class="li"><use href="#ly4"/></svg>
            </div>
            <div class="llist">
              <div class="lrow sel"><b>V</b><b>P</b><b></b><i class="sw"></i><span>LeftSmall</span></div>
              <div class="lrow"><b>V</b><b>P</b><b></b><i class="sw"></i><span>RightSmall</span></div>
              <div class="lrow"><b>V</b><b>P</b><b></b><i class="sw"></i><span>MiddleBig</span></div>
              <div class="lscroll"><i class="tri lf"></i><i class="hthumb"></i><i class="tri rt2"></i></div>
            </div>
          </div>
        </div>
      </div>

      <div class="vtabs">
        <span class="act t1">Channel Box / Layer Editor</span>
        <span class="t2">Modeling Toolkit</span>
        <span class="t3">Attribute Editor</span>
      </div>
    </section>

    <section class="timeline">
      <i class="hd"></i>
      <div class="track">
        <div class="cur"><span>1</span></div>
        <div class="tk"><span>5</span></div><div class="tk"><span>10</span></div><div class="tk"><span>15</span></div><div class="tk"><span>20</span></div><div class="tk"><span>25</span></div><div class="tk"><span>30</span></div><div class="tk"><span>35</span></div><div class="tk"><span>40</span></div><div class="tk"><span>45</span></div><div class="tk"><span>50</span></div><div class="tk"><span>55</span></div><div class="tk"><span>60</span></div><div class="tk"><span>65</span></div><div class="tk"><span>70</span></div><div class="tk"><span>75</span></div><div class="tk"><span>80</span></div><div class="tk"><span>85</span></div><div class="tk"><span>90</span></div><div class="tk"><span>95</span></div><div class="tk"><span>100</span></div><div class="tk"><span>105</span></div><div class="tk"><span>110</span></div><div class="tk"><span>115</span></div><div class="tk"><span>120</span></div>
      </div>
      <div class="field ff">1</div>
      <div class="play">
        <svg class="pi"><use href="#p1"/></svg><svg class="pi"><use href="#p2"/></svg><svg class="pi"><use href="#p3"/></svg><svg class="pi"><use href="#p4"/></svg><svg class="pi"><use href="#p5"/></svg><svg class="pi"><use href="#p6"/></svg><svg class="pi"><use href="#p7"/></svg><svg class="pi"><use href="#p8"/></svg>
      </div>
    </section>
    <div class="rule"></div>

    <section class="range">
      <i class="hd"></i>
      <div class="field f88">1</div>
      <div class="field f88">1</div>
      <div class="slide">
        <div class="slbar"><i class="knob"></i><span class="sl1">1</span><span class="sl2">120</span><i class="knob"></i></div>
      </div>
      <div class="field f88 nom">120</div>
      <div class="field f88">200</div>
      <i class="sep w10"></i>
      <span class="darr w28"><i class="trio"></i></span>
      <div class="sbox cset">No Character Set</div>
      <span class="darr w28"><i class="trio"></i></span>
      <div class="sbox aset">No Anim Layer</div>
      <i class="sep w24"></i>
      <div class="drop fps"><span>24 fps</span><b class="dcell"><i class="tri"></i></b></div>
      <span class="c23 rg1"><svg class="ic"><use href="#loop"/></svg></span>
      <span class="cach"><svg class="ic"><use href="#cach"/></svg></span>
      <i class="sep w20"></i>
      <span class="c23 rg2"><svg class="ic"><use href="#tm"/></svg></span>
      <span class="c23 rg3"><svg class="ic"><use href="#run"/></svg></span>
    </section>
    <div class="rule"></div>

    <section class="mel">
      <i class="hd"></i>
      <span class="mlab">MEL</span>
      <div class="mf m1"></div>
      <i class="mdots"></i>
      <div class="mf m2"></div>
      <svg class="scr"><use href="#scr"/></svg>
    </section>
    <div class="rule"></div>

    <section class="help">
      <i class="hd"></i>
      <span>Select Tool: select an object</span>
    </section>
  </div>
</div>

<footer class="taskbar">
  <span class="tb first"><svg class="tw"><use href="#win"/></svg></span>
  <span class="tb run"><svg class="ts"><use href="#exp"/></svg></span>
  <span class="tb run"><svg class="ts"><use href="#chr"/></svg></span>
  <span class="tb run"><svg class="ts"><use href="#spo"/></svg></span>
  <span class="tb"><svg class="ts"><use href="#mc"/></svg></span>
  <span class="tb"><svg class="ts"><use href="#sim"/></svg></span>
  <span class="tb"><svg class="ts"><use href="#nfx"/></svg></span>
  <span class="tb run"><svg class="ts"><use href="#ps"/></svg></span>
  <span class="tb"><svg class="ts"><use href="#fl"/></svg></span>
  <span class="tb"><svg class="ts"><use href="#veg"/></svg></span>
  <span class="tb"><svg class="ts"><use href="#c4d"/></svg></span>
  <span class="tb"><svg class="ts"><use href="#bld"/></svg></span>
  <span class="tb run act"><svg class="ts"><use href="#may"/></svg></span>
  <span class="tb"><svg class="ts"><use href="#gim"/></svg></span>
  <span class="tb"><svg class="ts"><use href="#obs"/></svg></span>
  <span class="tb"><svg class="ts"><use href="#dis"/></svg></span>
  <span class="tb"><svg class="ts"><use href="#stm"/></svg></span>
  <span class="tb"><svg class="ts"><use href="#wrd"/></svg></span>
  <div class="tray">
    <svg class="chev" viewBox="0 0 12 8"><path fill="none" stroke="#ddd" stroke-width="1.200" d="M1 7l5-5.500L11 7"/></svg>
    <svg class="tra a"><use href="#wifi"/></svg>
    <svg class="tra b"><use href="#vol"/></svg>
    <div class="clock"><span>18:58</span><span>27/11/2019</span></div>
    <svg class="notif"><use href="#note"/></svg>
  </div>
</footer>
</body>
</html>
```
FILE: styles.css
```css
*{box-sizing:border-box}
html,body{margin:0;padding:0}
body{width:1366px;height:768px;overflow:hidden;background:#444;color:#c8c8c8;font-family:"Open Sans","Noto Sans",sans-serif;font-size:11px;position:relative}
.defs{position:absolute;width:0;height:0}
i{display:block;font-style:normal}
b{font-weight:400}
em{font-style:normal}

.title{height:23px;background:#fff;color:#111;display:flex;align-items:center;font-size:12px;padding-left:3px}
.tlogo{width:16px;height:16px;margin-right:4px;flex:none}
.ttext{white-space:pre;letter-spacing:-.35px}
.wctl{margin-left:auto;display:flex;gap:34px;padding-right:19px;align-items:center}
.wbtn{width:12px;height:12px}

.menubar{height:22px;display:flex;align-items:center;padding-left:10px;font-size:11px;color:#cacaca;white-space:nowrap}
.menubar>span{margin-right:15px}
.wsp{margin-left:auto;display:flex;align-items:center;height:22px;padding:3px 7px 0 0;font-size:11.5px}
.wsplab{margin-right:8px;color:#c0c0c0}
.wspbox{width:191px;height:19px;background:#5a5a5a;border-radius:2px;display:flex;align-items:center;padding-left:3px;justify-content:space-between;color:#c8c8c8}
.dcell{width:19px;height:100%;background:#656565;display:flex;align-items:center;justify-content:center;border-radius:0 2px 2px 0}
.tri{width:0;height:0;border-left:5px solid transparent;border-right:5px solid transparent;border-top:6px solid #c8c8c8}
.tri.sm{border-left-width:4px;border-right-width:4px;border-top-width:4px;border-top-color:#999}
.tri.up{border-top:0;border-bottom:6px solid #c8c8c8}
.lock{width:12px;height:16px;margin-left:9px}

.main{height:683px;display:flex}
.left{width:83px;border-right:2px solid #333;padding-top:9px;flex:none}
.lhead{display:flex;align-items:center;height:14px;padding-left:10px}
.lname{font-size:9px;color:#8fa0b0;width:42px}
.lbtn{width:14px;height:13px;background:#333;border:1px solid #666;border-radius:2px;margin-right:2px;display:flex}
.lbtn svg{width:12px;height:11px}
.lcrash{margin-top:2px;font-size:11.5px;padding-left:1px;height:16px;line-height:16px;white-space:nowrap;overflow:hidden}
.lblock{height:47px;margin-top:-1px;background:linear-gradient(#5c5c5c 48%,#4d4d4d 48%,#4d4d4d 50%,#5c5c5c 50%)}

.work{flex:1;min-width:0;display:flex;flex-direction:column}
.rule{height:2px;background:#383838;flex:none;margin-left:5px}
.hd{width:4px;flex:none;border-left:1px dotted #808080;border-right:1px dotted #808080;height:20px}
.hd.tall{height:62px}
.status{height:32px;display:flex;align-items:center;padding:4px 0 0 9px;flex:none}
.status>.hd{margin-right:6px}
.drop{height:20px;background:#5a5a5a;border-radius:2px;display:flex;align-items:center;justify-content:space-between;padding-left:3px;color:#c8c8c8;flex:none}
.drop-mode{width:98px;font-size:11.5px}
.c23,.c35,.c19{flex:none;display:flex;align-items:center;justify-content:center}
.c23{width:23px;height:22px}
.c23.on{background:#5285a6}
.ic{width:20px;height:20px}
.sep{flex:none;height:16px;position:relative}
.sep::after{content:"";position:absolute;left:50%;margin-left:-1.500px;top:1px;width:3px;height:14px;background:#6a6a6a;border-radius:1px}
.w10{width:10px}.w11{width:11px}.w18{width:18px}.w20{width:20px}.w22{width:22px}.w24{width:24px}.w25{width:25px}.w28{width:28px}
.arr{flex:none;height:16px;position:relative}
.arr::after{content:"";position:absolute;left:50%;margin-left:-2px;top:0;width:0;height:0;border-top:8px solid transparent;border-bottom:8px solid transparent;border-left:5px solid #6e6e6e}
.darr{flex:none;display:flex;align-items:center;justify-content:center}
.sbox{flex:none;width:100px;height:20px;border:1px solid #505050;border-radius:3px;display:flex;align-items:center;padding-left:5px;font-size:10.7px;color:#bdbdbd;white-space:nowrap}
.ipr{position:relative}
.ipr em{position:absolute;left:3px;right:3px;top:9px;text-align:center;font-size:8px;line-height:9px;color:#333;font-weight:700;font-family:"Liberation Sans",sans-serif}
.sign{flex:none;width:79px;height:22px;background:#555;display:flex;align-items:center;color:#eee;font-size:12px;font-weight:600;padding-left:4px}
.usr{width:18px;height:18px;margin-right:3px}

.shelf{height:68px;display:flex;padding:2px 0 0 9px;flex:none}
.shelfl{width:20px;height:62px;margin-left:6px;background:#363636;display:flex;flex-direction:column;align-items:center;padding-top:12px;flex:none}
.eq{width:12px;height:6px}
.gr{width:13px;height:13px;margin-top:23px}
.shelfm{flex:1;margin-left:3px;min-width:0;display:flex;flex-direction:column}
.tabs{height:17px;margin:2px 3px 0 0;background:#333;display:flex;padding-left:2px;color:#a4a4a4;font-size:11px}
.tabs span{height:17px;line-height:18px;margin-right:2px;background:#3c3c3c;border:1px solid #2e2e2e;border-bottom:0;border-radius:3px 3px 0 0;white-space:nowrap;text-align:center;flex:none}
.tabs span:nth-child(1){width:108px}
.tabs span:nth-child(2){width:97px}
.tabs span:nth-child(3){width:70px}
.tabs span:nth-child(4){width:63px}
.tabs span:nth-child(5){width:76px}
.tabs span:nth-child(6){width:76px}
.tabs span:nth-child(7){width:34px}
.tabs span:nth-child(8){width:78px}
.tabs span:nth-child(9){width:61px}
.tabs span:nth-child(10){width:58px}
.tabs span:nth-child(11){width:55px}
.tabs span:nth-child(12){width:53px}
.tabs span:nth-child(13){width:107px}
.tabs span:nth-child(14){width:47px}
.tabs .act{background:#444;color:#eee;border-color:#444}
.shbody{flex:1;display:flex;align-items:center;padding-left:4px;padding-bottom:7px;position:relative}
.c35{width:35px;height:36px}
.sh{width:28px;height:28px}
.shsep{width:2px;height:34px;background:#8a8a8a}
.shscroll{margin-left:auto;margin-right:4px;width:12px;height:34px;background:#363636;display:flex;flex-direction:column;align-items:center;justify-content:space-around;flex:none}
.shscroll .tri{border-left-width:4px;border-right-width:4px;border-top-width:5px}
.shscroll .tri.up{border-bottom-width:5px}
.shdot{width:10px;height:10px;border-radius:50%;background:#666}

.center{height:442px;display:flex;flex:none}
.toolbox{width:49px;padding:0 4px 0 9px;flex:none;display:flex;flex-direction:column;align-items:stretch}
.tdots{height:9px;border-top:1px dotted #808080;margin:3px 0 0;flex:none}
.tool{height:37px;display:flex;align-items:center;justify-content:center;flex:none}
.tool.on{background:#5285a6;height:36px;margin-bottom:1px}
.ti{width:32px;height:32px}
.tline{height:3px;background:#8a8a8a;margin-top:79px;flex:none}
.tpane{width:28px;height:28px;margin:9px 4px 0;flex:none}
.tpanes{width:28px;height:28px;margin:7px 4px 0;flex:none}
.tcut{height:4px;margin:1px 4px 0;border:1px solid #c8c8c8;border-bottom:0;flex:none}
.tlogo2{width:32px;height:30px;margin:11px 2px 0;flex:none}
.outl{width:19px;height:64px;margin:3px 0 0 2px;background:#3c3c3c;border:1px solid #333;border-left:0;border-radius:0 0 3px 3px;flex:none;display:flex;align-items:center;justify-content:center}
.outl span{writing-mode:vertical-rl;transform:rotate(180deg);color:#999;font-size:10.5px}

.frame{width:921px;height:434px;margin:3px 0 0 3px;border:1px solid #808080;padding:0 1px 1px;flex:none;display:flex;flex-direction:column;background:#444}
.vmenu{height:18px;display:flex;padding:0 0 2px 7px;align-items:center;font-size:11px;flex:none;color:#c4c4c4}
.vmenu span{margin-right:16.400px}
.vbar{height:21px;display:flex;align-items:center;flex:none}
.c19{width:19px;height:18px}
.c19.on{background:#5285a6}
.c19.dk{background:#3c3c3c}
.vi{width:16px;height:16px}
.vnum{flex:none;width:38px;height:14px;background:#252525;border-radius:2px;text-align:center;line-height:14px;color:#aebccc;font-size:10.5px;margin-left:2px}
.n2{margin-left:2px;width:21px}
.onb{margin-left:3px}
.gamma{flex:1;height:18px;background:#5a5a5a;margin-left:3px;padding-left:3px;line-height:18px;color:#c8c8c8;font-size:11px}
.canvas{flex:1;min-height:0}
.scene{display:block;width:917px;height:392px}
.floor path{fill:none;stroke:#484848;stroke-width:1;shape-rendering:crispEdges}
.floor path.lt{stroke:#707070;stroke-width:2}
.floor path.hv{stroke:#444;stroke-width:2}
.wire{fill:none;stroke:#9a0030;stroke-width:1;shape-rendering:crispEdges}
.ln{fill:none}
.blk{fill:#000;stroke:none}
.blkp{fill:#000;stroke:#9a0030}
.gls{fill:#070707;stroke:none}
.fillc{fill:#9a0030;stroke:none}
.thick9{stroke-width:9.500}
.thick6{stroke-width:6}
.ax{fill:none;stroke-width:1;shape-rendering:crispEdges}
.gr1{stroke:#30e030}.rd1{stroke:#d02020}.bl1{stroke:#2020d0}
.axt{font-family:"DejaVu Sans Mono",monospace;font-size:10px;font-weight:700;text-anchor:middle}
.gt{fill:#30d030}.rt{fill:#e02020}.bt{fill:#2020c0;font-size:8px}
.persp{font-family:"DejaVu Sans",sans-serif;font-size:9.500px;font-weight:700;fill:#ececec;text-anchor:middle}
.ontx{font-family:"Liberation Sans",sans-serif;font-size:6px;font-weight:700;fill:#222;text-anchor:middle}
.scrtx{font-family:"Liberation Mono",monospace;font-size:9px;fill:#333;text-anchor:middle}
.tbtx{font-family:"Liberation Sans",sans-serif;font-weight:700;text-anchor:middle;font-size:13px}
.psc{fill:#00c8ff}.flc{fill:#f0401a}.vc{fill:#1aa3ff;font-size:16px}.wc{fill:#fff;font-size:9px}.ntc{fill:#ccc;font-size:10px}

.right{width:262px;margin-left:8px;flex:none;display:flex;flex-direction:column}
.rico{height:21px;display:flex;justify-content:flex-end;gap:5px;padding:3px 2px 0 0;flex:none}
.rmenu{height:23px;display:flex;align-items:center;padding-left:9px;flex:none}
.rmenu span{margin-right:15.500px}
.chan{height:197px;display:flex;flex:none;overflow:hidden}
.rows{width:248px;flex:none}
.row{height:16px;display:flex;align-items:center}
.row label{width:168px;text-align:right;color:#bcbcbc;white-space:nowrap;font-size:10.400px}
.cell{width:74px;height:15px;margin-left:6px;background:#2b2b2b;border-radius:2px;display:flex;align-items:center;overflow:hidden}
.gy{width:7px;height:15px;background:#7c7c7c;flex:none}
.no{width:7px;flex:none}
.cell span{padding:0 0 1px 2px;color:#c8c8c8}
.cell .hl{background:#333;width:16px}
.vscroll{width:12px;margin-left:2px;position:relative;display:flex;flex-direction:column;align-items:center;flex:none}
.vscroll .tri{position:absolute;left:1px}
.vscroll .tri.up{top:2px}
.vscroll .tri:last-child{bottom:1px}
.thumb{position:absolute;left:1px;top:83px;width:10px;height:58px;background:#5a5a5a;border-radius:4px}
.dotline{height:10px;margin:0 90px 0 88px;border-bottom:1px dotted #888;flex:none;transform:translateY(-1px)}
.layer{flex:none;height:182px;margin:3px 0 0 -1px;display:flex;flex-direction:column;background:#383838}
.ltabs{display:flex;height:18px;padding:2px 0 0 2px;flex:none}
.ltabs span{width:58px;height:16px;text-align:center;line-height:16px;background:#3c3c3c;color:#808080;border-radius:3px 3px 0 0;border:1px solid #333;border-bottom:0;margin-right:2px}
.ltabs span+span{width:47px}
.ltabs .act{background:#444;color:#ddd;border-color:#444}
.lbody{flex:1;background:#444;display:flex;flex-direction:column;padding:0 5px 4px 5px}
.lmenu{height:20px;display:flex;align-items:center;padding-left:8px;flex:none}
.lmenu span{margin-right:15px}
.lico{height:26px;display:flex;justify-content:flex-end;align-items:flex-start;padding:4px 5px 0 0;gap:8px;flex:none}
.li{width:16px;height:12px}
.llist{flex:1;background:#2b2b2b;border:1px solid #222;padding-top:1px;display:flex;flex-direction:column;position:relative}
.lrow{height:20px;display:flex;align-items:center;padding-left:4px;color:#f0f0f0;flex:none}
.lrow b{width:20px;height:14px;margin-right:3px;border:1px solid #1b1b1b;border-radius:3px;text-align:center;line-height:12px;background:#333;font-size:11px}
.lrow b:nth-child(3){background:#333;border-color:#222}
.sw{width:16px;height:16px;background:#94002f;margin-right:3px;flex:none}
.lrow.sel{background:#5285a6;color:#1b1b1b}
.lrow.sel b{background:#5285a6;border-color:#2b4a60}
.lscroll{margin-top:auto;height:12px;background:#3b3b3b;display:flex;align-items:center;position:relative;flex:none}
.lscroll .tri.lf{border:4px solid transparent;border-right:5px solid #c8c8c8;border-left:0;margin-left:3px}
.hthumb{position:absolute;left:13px;width:161px;height:10px;top:1px;background:#5a5a5a;border-radius:4px}
.lscroll .rt2{border:4px solid transparent;border-left:5px solid #c8c8c8;border-right:0;margin-left:auto;margin-right:3px}

.vtabs{margin-left:3px;flex:1;display:flex;flex-direction:column;padding-top:3px;min-width:0}
.vtabs span{writing-mode:vertical-rl;width:16px;padding:10px 2px 0 0;font-size:11px;border-radius:0 3px 3px 0;background:#3c3c3c;color:#777;margin-bottom:1px;white-space:nowrap;overflow:hidden;line-height:14px}
.vtabs .act{background:#444;color:#ddd}
.vtabs .t1{height:155px}.vtabs .t2{height:111px;padding-top:11px}.vtabs .t3{height:102px;padding-top:11px}

.timeline{height:40px;display:flex;align-items:center;padding:0 0 0 15px;flex:none}
.timeline .hd{height:30px;margin-right:6px}
.track{width:964px;height:32px;background:#2b2b2b;display:flex;overflow:hidden;flex:none}
.cur{width:30px;flex:none;position:relative;color:#d0d0ff;font-size:10.5px;background:linear-gradient(#4c4c4c,#4c4c4c) no-repeat 0 0/5px 32px;padding:13px 0 0 0}
.tk{width:40px;flex:none;color:#777;font-size:10.5px;padding-left:3px;line-height:13px;background:linear-gradient(#777,#777) no-repeat 0 13px/2px 15px;white-space:nowrap}
.field{flex:none;background:#2b2b2b;border-radius:2px;display:flex;align-items:center;padding-left:5px;color:#c8c8c8;font-size:11px}
.ff{width:88px;height:18px;margin-left:6px}
.play{display:flex;margin:0 0 4px 10px;flex:none;gap:7px;width:190px}
.pi{width:16px;height:16px}
.range{height:34px;display:flex;align-items:center;padding-left:15px;flex:none}
.range>.hd{height:24px;margin-right:0}
.f88{width:88px;height:25px;margin-left:8px}
.f88.nom{margin-left:0}
.range>.hd+.f88{margin-left:0}
.slide{flex:none;width:351px;height:25px;background:#353535;margin:0 7px 0 7px;padding:1px 0 0 2px}
.slbar{width:218px;height:23px;background:#5e5e5e;border-radius:4px;display:flex;align-items:center;padding:0 3px 0 2px}
.knob{width:15px;height:16px;background:#9a9a9a;border-radius:3px;flex:none}
.sl1{margin-left:4px;color:#c8c8c8}
.sl2{margin-left:auto;margin-right:4px;color:#c8c8c8}
.cset{width:100px;height:23px}
.aset{width:102px;height:23px}
.fps{width:95px;height:19px}
.fps .dcell{background:#656565}
.trio{width:0;height:0;border-left:5px solid transparent;border-right:5px solid transparent;border-top:6px solid #888}
.rg1{margin-left:10px}
.cach{flex:none;width:23px;height:23px;margin-left:7px;background:#5285a6;border:1px solid #30d030;display:flex;align-items:center;justify-content:center}
.rg2{margin-left:-1px}
.rg3{margin-left:7px}
.mel{height:33px;display:flex;align-items:center;padding-left:15px;flex:none}
.mel .hd{height:22px}
.mlab{color:#ddd;margin-left:10px;width:35px;font-size:11px}
.mf{height:22px;background:#2b2b2b;border-radius:2px;flex:none}
.m1{width:429px}
.mdots{width:8px;flex:none}
.m2{width:749px}
.scr{width:20px;height:22px;margin-left:5px;flex:none}
.help{flex:1;display:flex;align-items:center;padding-left:15px;color:#bbb;font-size:10px}
.help .hd{height:22px;margin-right:10px}

.taskbar{height:40px;background:#282828;display:flex;color:#eee;font-size:12px;align-items:stretch}
.tb{width:49px;display:flex;align-items:center;justify-content:center;flex:none;border-bottom:2px solid transparent;position:relative}
.tb.first{width:50px}
.tb.run::after{content:"";position:absolute;left:5px;right:5px;bottom:-2px;height:2px;background:#8ac7f2}
.tb.act{background:#555;width:44px;margin:0 3px 0 2px}
.tb.act::after{left:0;right:0}
.tw{width:17px;height:17px}
.ts{width:24px;height:24px}
.tray{margin-left:auto;display:flex;align-items:center;flex:none}
.chev{width:11px;height:7px;margin-right:12px}
.tra{width:16px;height:18px}
.tra.a{margin-right:7px}
.tra.b{margin-right:4px}
.clock{width:70px;display:flex;flex-direction:column;align-items:center;line-height:19px;margin:0 5px 2px 0;font-size:12px}
.notif{width:28px;height:28px;margin-right:20px}
```
